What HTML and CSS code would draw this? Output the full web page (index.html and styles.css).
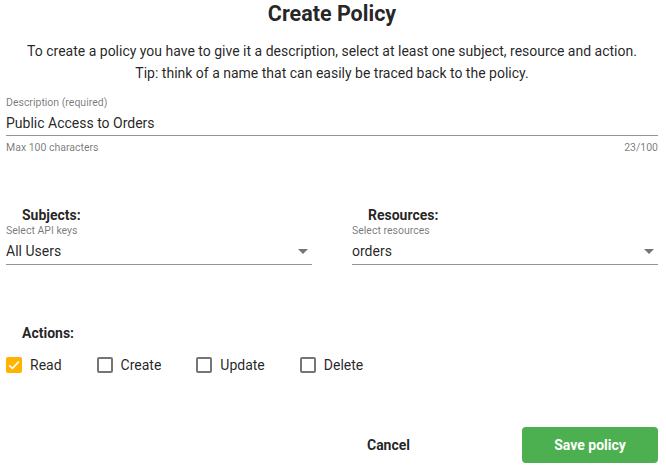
FILE: index.html
```html
<!DOCTYPE html>
<html lang="en">
<head>
<meta charset="utf-8">
<title>Create Policy</title>
<link rel="stylesheet" href="styles.css">
</head>
<body>
<div class="dialog">
  <h1 class="title">Create Policy</h1>
  <p class="intro">To create a policy you have to give it a description, select at least one subject, resource and action.<br>Tip: think of a name that can easily be traced back to the policy.</p>

  <div class="field desc">
    <div class="float">Description (required)</div>
    <div class="value">Public Access to Orders</div>
    <div class="line"></div>
    <div class="hint-row"><span>Max 100 characters</span><span>23/100</span></div>
  </div>

  <div class="selects">
    <div class="col">
      <h2 class="section">Subjects:</h2>
      <div class="field">
        <div class="float">Select API keys</div>
        <div class="value select-value"><span>All Users</span><span class="arrow"></span></div>
        <div class="line"></div>
      </div>
    </div>
    <div class="col">
      <h2 class="section">Resources:</h2>
      <div class="field">
        <div class="float">Select resources</div>
        <div class="value select-value"><span>orders</span><span class="arrow"></span></div>
        <div class="line"></div>
      </div>
    </div>
  </div>

  <h2 class="section actions-title">Actions:</h2>
  <div class="checks">
    <label class="check"><span class="box checked"><svg viewBox="0 0 16 16" width="16" height="16"><path d="M3.2 8.3 L6.4 11.3 L12.8 4.6" fill="none" stroke="#fff" stroke-width="1.6"/></svg></span>Read</label>
    <label class="check"><span class="box"></span>Create</label>
    <label class="check"><span class="box"></span>Update</label>
    <label class="check"><span class="box"></span>Delete</label>
  </div>

  <div class="buttons">
    <button class="btn cancel">Cancel</button>
    <button class="btn save">Save policy</button>
  </div>
</div>
</body>
</html>
```

FILE: styles.css
```css
html, body {
  margin: 0;
  padding: 0;
  background: #fff;
}
body {
  font-family: Roboto, "Liberation Sans", sans-serif;
  color: rgba(0, 0, 0, 0.87);
}
.dialog {
  width: 666px;
  height: 471px;
  box-sizing: border-box;
  padding: 0 8px 0 6px;
}
.title {
  margin: 0;
  font-size: 21.5px;
  font-weight: 700;
  line-height: 28px;
  text-align: center;
}
.intro {
  margin: 12px 0 0;
  font-size: 14px;
  line-height: 22px;
  text-align: center;
}
.field .float {
  font-size: 10.5px;
  line-height: 14px;
  color: rgba(0, 0, 0, 0.54);
}
.desc {
  margin-top: 12px;
}
.field .value {
  font-size: 14px;
  line-height: 20px;
  margin-top: 3px;
}
.desc .line {
  margin-top: 2px;
}
.line {
  height: 1px;
  background: rgba(0, 0, 0, 0.42);
}
.hint-row {
  display: flex;
  justify-content: space-between;
  margin-top: 5px;
  font-size: 10.5px;
  line-height: 14px;
  color: rgba(0, 0, 0, 0.54);
}
.selects {
  display: grid;
  grid-template-columns: 1fr 1fr;
  column-gap: 40px;
  margin-top: 52px;
}
.section {
  margin: 0;
  padding-left: 16px;
  font-size: 14px;
  font-weight: 700;
  line-height: 16px;
}
.selects .section {
  margin-bottom: 1px;
}
.select-value {
  display: flex;
  justify-content: space-between;
  align-items: center;
}
.select-value + .line {
  margin-top: 3px;
}
.arrow {
  width: 0;
  height: 0;
  border-left: 5px solid transparent;
  border-right: 5px solid transparent;
  border-top: 5px solid rgba(0, 0, 0, 0.54);
  margin-right: 4px;
}
.actions-title {
  margin-top: 60px;
}
.checks {
  display: flex;
  gap: 35px;
  margin-top: 14px;
  height: 20px;
  align-items: center;
}
.check {
  display: flex;
  align-items: center;
  gap: 8px;
  font-size: 14px;
  line-height: 20px;
}
.box {
  width: 16px;
  height: 16px;
  box-sizing: border-box;
  border: 2px solid rgba(0, 0, 0, 0.54);
  border-radius: 2px;
  display: block;
  position: relative;
}
.box.checked {
  background: #ffb300;
  border-color: #ffb300;
}
.box svg {
  position: absolute;
  left: -2px;
  top: -2px;
}
.buttons {
  display: flex;
  justify-content: flex-end;
  gap: 80px;
  margin-top: 52px;
}
.btn {
  height: 36px;
  border: 0;
  border-radius: 4px;
  font-family: Roboto, "Liberation Sans", sans-serif;
  font-size: 14px;
  font-weight: 700;
  padding: 0;
  cursor: pointer;
}
.cancel {
  width: 107px;
  background: #fff;
  color: rgba(0, 0, 0, 0.87);
}
.save {
  width: 136px;
  background: #4caf50;
  color: #fff;
}
```
